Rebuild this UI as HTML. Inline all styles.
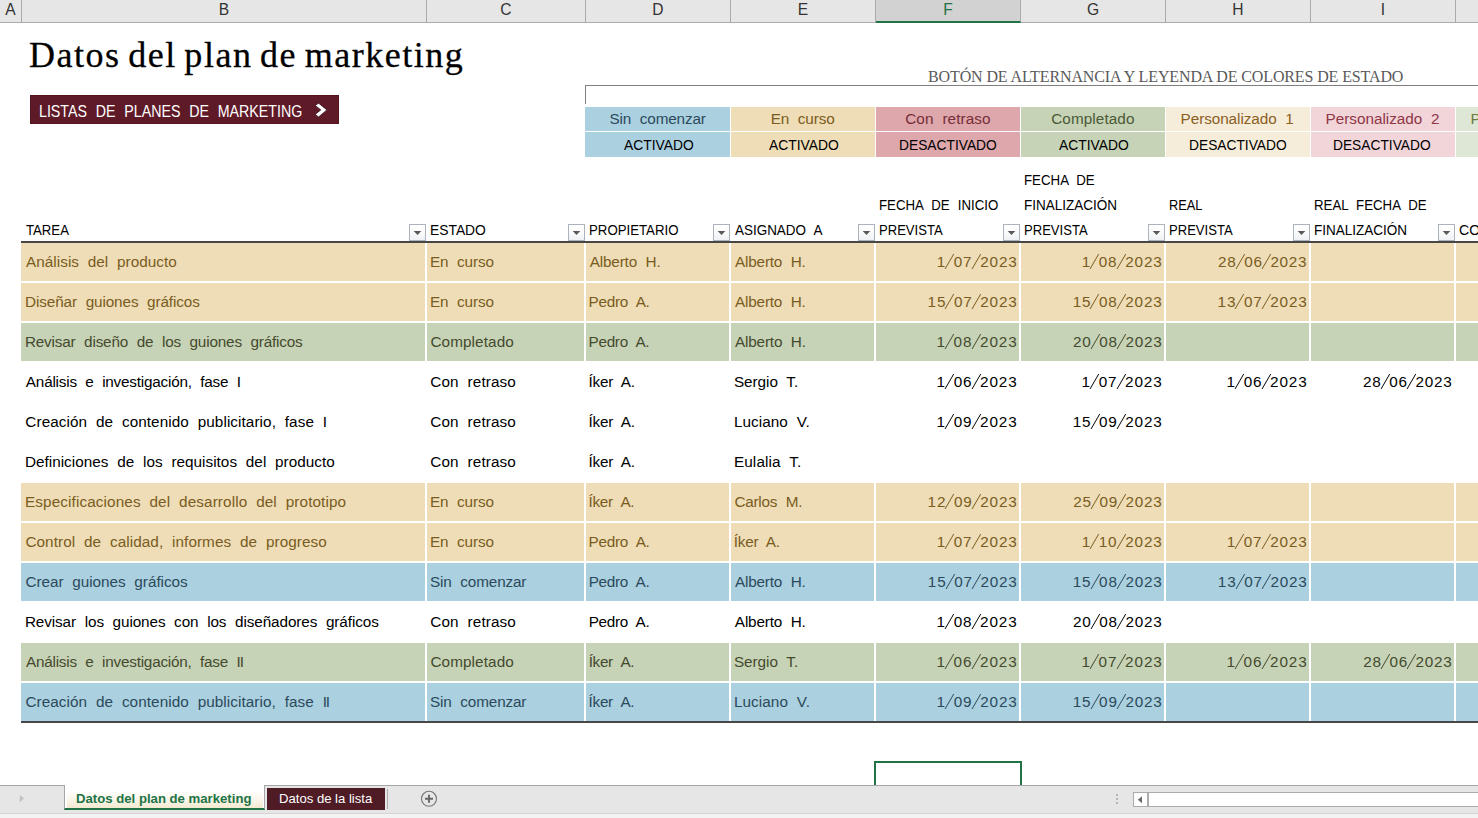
<!DOCTYPE html>
<html><head><meta charset="utf-8"><title>Datos del plan de marketing</title>
<style>
html,body{margin:0;padding:0;}
body{width:1478px;height:818px;overflow:hidden;background:#fff;position:relative;font-family:"Liberation Sans",sans-serif;font-size:15.3px;color:#000;}
div,span{box-sizing:border-box;}
.abs{position:absolute;}
.colhdr{position:absolute;top:0;height:22px;background:#e6e6e6;border-right:1px solid #ababab;text-align:center;font-size:15.6px;line-height:19px;color:#333;}
.colhdr.sel{height:23px;background:#d2d2d2;color:#217346;border-bottom:2px solid #217346;}
.bg{position:absolute;height:38px;}
.t{position:absolute;white-space:nowrap;line-height:17.09px;height:17.09px;transform-origin:0 0;display:block;}
.t i{display:inline-block;width:1.3px;height:14.6px;background:currentColor;transform:skewX(-30deg);margin:0 3.2px;vertical-align:-1.2px;}
.t b{font-weight:normal;letter-spacing:-1.2px;}
.fb{position:absolute;width:17px;height:17px;top:224px;border:1px solid #adb3bc;background:linear-gradient(#ffffff 0%,#fcfcfd 40%,#eef1f5 100%);}
.fb svg{position:absolute;left:0;top:0;}
.lg{position:absolute;}
</style></head><body>

<div class="abs" style="left:0;top:0;width:1478px;height:23px;background:#e6e6e6;border-bottom:1px solid #ababab;"></div>
<div class="colhdr" style="left:0px;width:22px;">A</div>
<div class="colhdr" style="left:22px;width:405px;">B</div>
<div class="colhdr" style="left:427px;width:159px;">C</div>
<div class="colhdr" style="left:586px;width:145px;">D</div>
<div class="colhdr" style="left:731px;width:145px;">E</div>
<div class="colhdr sel" style="left:876px;width:145px;">F</div>
<div class="colhdr" style="left:1021px;width:145px;">G</div>
<div class="colhdr" style="left:1166px;width:145px;">H</div>
<div class="colhdr" style="left:1311px;width:145px;">I</div>
<div class="colhdr" style="left:1456px;width:145px;">J</div>
<div class="abs" id="title" style="left:29px;top:33px;font-family:'Liberation Serif',serif;font-size:36px;line-height:44px;white-space:nowrap;letter-spacing:1.52px;word-spacing:-2.9px;-webkit-text-stroke:0.3px #000;">Datos del plan de marketing</div>
<div class="abs" style="left:30px;top:95px;width:309px;height:29px;background:#5F1A28;border:1px solid #561320;"></div>
<svg class="abs" style="left:312px;top:100px;" width="18" height="20" viewBox="0 0 18 20"><path d="M3.2 5.4 L6.6 3.2 L14.9 9.9 L6.6 16.9 L3.2 14.4 L8.8 9.9 Z" fill="#fff" stroke="#2a060c" stroke-width="0.7"/></svg>
<div class="abs" id="lh" style="left:928px;top:67px;font-family:'Liberation Serif',serif;font-size:16px;line-height:20px;color:#595959;white-space:nowrap;letter-spacing:-0.12px;">BOTÓN DE ALTERNANCIA Y LEYENDA DE COLORES DE ESTADO</div>
<div class="abs" style="left:585px;top:85px;width:900px;height:19px;border-top:1px solid #7f7f7f;border-left:1px solid #7f7f7f;"></div>
<div class="lg" style="left:585px;top:107px;width:145px;height:24px;background:#ABD0DF;"></div>
<div class="lg" style="left:585px;top:132px;width:145px;height:25px;background:#ABD0DF;"></div>
<div class="lg" style="left:731px;top:107px;width:144px;height:24px;background:#EEDDB6;"></div>
<div class="lg" style="left:731px;top:132px;width:144px;height:25px;background:#EEDDB6;"></div>
<div class="lg" style="left:876px;top:107px;width:144px;height:24px;background:#DDA7AC;"></div>
<div class="lg" style="left:876px;top:132px;width:144px;height:25px;background:#DDA7AC;"></div>
<div class="lg" style="left:1021px;top:107px;width:144px;height:24px;background:#C6D3B6;"></div>
<div class="lg" style="left:1021px;top:132px;width:144px;height:25px;background:#C6D3B6;"></div>
<div class="lg" style="left:1166px;top:107px;width:144px;height:24px;background:#F6ECDA;"></div>
<div class="lg" style="left:1166px;top:132px;width:144px;height:25px;background:#F6ECDA;"></div>
<div class="lg" style="left:1311px;top:107px;width:144px;height:24px;background:#F1D5D9;"></div>
<div class="lg" style="left:1311px;top:132px;width:144px;height:25px;background:#F1D5D9;"></div>
<div class="lg" style="left:1456px;top:107px;width:144px;height:24px;background:#DEE6D5;"></div>
<div class="lg" style="left:1456px;top:132px;width:144px;height:25px;background:#DEE6D5;"></div>
<span class="t" style="left:1470.5px;top:109.70px;color:#6B7A3A;">P</span>
<span class="t" style="left:1458.8px;top:220.70px;color:#000;transform:scaleX(0.92);">COMENTARIOS</span>
<div class="fb" style="left:409px;"><svg width="15" height="15" viewBox="0 0 15 15"><path d="M3.7 5.9 H11.3 L7.5 10.1 Z" fill="#585858"/></svg></div>
<div class="fb" style="left:568px;"><svg width="15" height="15" viewBox="0 0 15 15"><path d="M3.7 5.9 H11.3 L7.5 10.1 Z" fill="#585858"/></svg></div>
<div class="fb" style="left:713px;"><svg width="15" height="15" viewBox="0 0 15 15"><path d="M3.7 5.9 H11.3 L7.5 10.1 Z" fill="#585858"/></svg></div>
<div class="fb" style="left:858px;"><svg width="15" height="15" viewBox="0 0 15 15"><path d="M3.7 5.9 H11.3 L7.5 10.1 Z" fill="#585858"/></svg></div>
<div class="fb" style="left:1003px;"><svg width="15" height="15" viewBox="0 0 15 15"><path d="M3.7 5.9 H11.3 L7.5 10.1 Z" fill="#585858"/></svg></div>
<div class="fb" style="left:1148px;"><svg width="15" height="15" viewBox="0 0 15 15"><path d="M3.7 5.9 H11.3 L7.5 10.1 Z" fill="#585858"/></svg></div>
<div class="fb" style="left:1293px;"><svg width="15" height="15" viewBox="0 0 15 15"><path d="M3.7 5.9 H11.3 L7.5 10.1 Z" fill="#585858"/></svg></div>
<div class="fb" style="left:1438px;"><svg width="15" height="15" viewBox="0 0 15 15"><path d="M3.7 5.9 H11.3 L7.5 10.1 Z" fill="#585858"/></svg></div>
<div class="abs" style="left:21px;top:241px;width:1460px;height:2px;background:#474747;"></div>
<div class="bg" style="left:21px;top:243px;width:404px;background:#EEDDB6;"></div>
<div class="bg" style="left:427px;top:243px;width:157px;background:#EEDDB6;"></div>
<div class="bg" style="left:586px;top:243px;width:143px;background:#EEDDB6;"></div>
<div class="bg" style="left:731px;top:243px;width:143px;background:#EEDDB6;"></div>
<div class="bg" style="left:876px;top:243px;width:143px;background:#EEDDB6;"></div>
<div class="bg" style="left:1021px;top:243px;width:143px;background:#EEDDB6;"></div>
<div class="bg" style="left:1166px;top:243px;width:143px;background:#EEDDB6;"></div>
<div class="bg" style="left:1311px;top:243px;width:143px;background:#EEDDB6;"></div>
<div class="bg" style="left:1456px;top:243px;width:144px;background:#EEDDB6;"></div>
<div class="bg" style="left:21px;top:283px;width:404px;background:#EEDDB6;"></div>
<div class="bg" style="left:427px;top:283px;width:157px;background:#EEDDB6;"></div>
<div class="bg" style="left:586px;top:283px;width:143px;background:#EEDDB6;"></div>
<div class="bg" style="left:731px;top:283px;width:143px;background:#EEDDB6;"></div>
<div class="bg" style="left:876px;top:283px;width:143px;background:#EEDDB6;"></div>
<div class="bg" style="left:1021px;top:283px;width:143px;background:#EEDDB6;"></div>
<div class="bg" style="left:1166px;top:283px;width:143px;background:#EEDDB6;"></div>
<div class="bg" style="left:1311px;top:283px;width:143px;background:#EEDDB6;"></div>
<div class="bg" style="left:1456px;top:283px;width:144px;background:#EEDDB6;"></div>
<div class="bg" style="left:21px;top:323px;width:404px;background:#C6D3B6;"></div>
<div class="bg" style="left:427px;top:323px;width:157px;background:#C6D3B6;"></div>
<div class="bg" style="left:586px;top:323px;width:143px;background:#C6D3B6;"></div>
<div class="bg" style="left:731px;top:323px;width:143px;background:#C6D3B6;"></div>
<div class="bg" style="left:876px;top:323px;width:143px;background:#C6D3B6;"></div>
<div class="bg" style="left:1021px;top:323px;width:143px;background:#C6D3B6;"></div>
<div class="bg" style="left:1166px;top:323px;width:143px;background:#C6D3B6;"></div>
<div class="bg" style="left:1311px;top:323px;width:143px;background:#C6D3B6;"></div>
<div class="bg" style="left:1456px;top:323px;width:144px;background:#C6D3B6;"></div>
<div class="bg" style="left:21px;top:483px;width:404px;background:#EEDDB6;"></div>
<div class="bg" style="left:427px;top:483px;width:157px;background:#EEDDB6;"></div>
<div class="bg" style="left:586px;top:483px;width:143px;background:#EEDDB6;"></div>
<div class="bg" style="left:731px;top:483px;width:143px;background:#EEDDB6;"></div>
<div class="bg" style="left:876px;top:483px;width:143px;background:#EEDDB6;"></div>
<div class="bg" style="left:1021px;top:483px;width:143px;background:#EEDDB6;"></div>
<div class="bg" style="left:1166px;top:483px;width:143px;background:#EEDDB6;"></div>
<div class="bg" style="left:1311px;top:483px;width:143px;background:#EEDDB6;"></div>
<div class="bg" style="left:1456px;top:483px;width:144px;background:#EEDDB6;"></div>
<div class="bg" style="left:21px;top:523px;width:404px;background:#EEDDB6;"></div>
<div class="bg" style="left:427px;top:523px;width:157px;background:#EEDDB6;"></div>
<div class="bg" style="left:586px;top:523px;width:143px;background:#EEDDB6;"></div>
<div class="bg" style="left:731px;top:523px;width:143px;background:#EEDDB6;"></div>
<div class="bg" style="left:876px;top:523px;width:143px;background:#EEDDB6;"></div>
<div class="bg" style="left:1021px;top:523px;width:143px;background:#EEDDB6;"></div>
<div class="bg" style="left:1166px;top:523px;width:143px;background:#EEDDB6;"></div>
<div class="bg" style="left:1311px;top:523px;width:143px;background:#EEDDB6;"></div>
<div class="bg" style="left:1456px;top:523px;width:144px;background:#EEDDB6;"></div>
<div class="bg" style="left:21px;top:563px;width:404px;background:#ABD0DF;"></div>
<div class="bg" style="left:427px;top:563px;width:157px;background:#ABD0DF;"></div>
<div class="bg" style="left:586px;top:563px;width:143px;background:#ABD0DF;"></div>
<div class="bg" style="left:731px;top:563px;width:143px;background:#ABD0DF;"></div>
<div class="bg" style="left:876px;top:563px;width:143px;background:#ABD0DF;"></div>
<div class="bg" style="left:1021px;top:563px;width:143px;background:#ABD0DF;"></div>
<div class="bg" style="left:1166px;top:563px;width:143px;background:#ABD0DF;"></div>
<div class="bg" style="left:1311px;top:563px;width:143px;background:#ABD0DF;"></div>
<div class="bg" style="left:1456px;top:563px;width:144px;background:#ABD0DF;"></div>
<div class="bg" style="left:21px;top:643px;width:404px;background:#C6D3B6;"></div>
<div class="bg" style="left:427px;top:643px;width:157px;background:#C6D3B6;"></div>
<div class="bg" style="left:586px;top:643px;width:143px;background:#C6D3B6;"></div>
<div class="bg" style="left:731px;top:643px;width:143px;background:#C6D3B6;"></div>
<div class="bg" style="left:876px;top:643px;width:143px;background:#C6D3B6;"></div>
<div class="bg" style="left:1021px;top:643px;width:143px;background:#C6D3B6;"></div>
<div class="bg" style="left:1166px;top:643px;width:143px;background:#C6D3B6;"></div>
<div class="bg" style="left:1311px;top:643px;width:143px;background:#C6D3B6;"></div>
<div class="bg" style="left:1456px;top:643px;width:144px;background:#C6D3B6;"></div>
<div class="bg" style="left:21px;top:683px;width:404px;background:#ABD0DF;"></div>
<div class="bg" style="left:427px;top:683px;width:157px;background:#ABD0DF;"></div>
<div class="bg" style="left:586px;top:683px;width:143px;background:#ABD0DF;"></div>
<div class="bg" style="left:731px;top:683px;width:143px;background:#ABD0DF;"></div>
<div class="bg" style="left:876px;top:683px;width:143px;background:#ABD0DF;"></div>
<div class="bg" style="left:1021px;top:683px;width:143px;background:#ABD0DF;"></div>
<div class="bg" style="left:1166px;top:683px;width:143px;background:#ABD0DF;"></div>
<div class="bg" style="left:1311px;top:683px;width:143px;background:#ABD0DF;"></div>
<div class="bg" style="left:1456px;top:683px;width:144px;background:#ABD0DF;"></div>
<div class="abs" style="left:21px;top:721px;width:1460px;height:2px;background:#474747;"></div>
<div class="abs" style="left:874px;top:761px;width:148px;height:30px;border:2px solid #217346;"></div>
<div class="abs" style="left:0;top:785px;width:1478px;height:28px;background:#e6e6e6;border-top:1px solid #a6a6a6;"></div>
<div class="abs" style="left:0;top:813px;width:1478px;height:5px;background:#f3f3f3;border-top:1px solid #d4d4d4;"></div>
<svg class="abs" style="left:18px;top:793px;" width="8" height="11" viewBox="0 0 8 11"><path d="M1.8 1.8 L6 5.5 L1.8 9.2 Z" fill="#c2c2c2"/></svg>
<div class="abs" style="left:64px;top:785px;width:201px;height:25px;background:#fff;border-left:1px solid #a6a6a6;border-right:1px solid #a6a6a6;border-bottom:2px solid #217346;"><div style="position:absolute;left:2px;right:1px;top:1px;bottom:0;background:linear-gradient(#ffffff 0%,#ffffff 20%,#faf5e8 65%,#f3e9d0 100%);"></div></div><div class="abs" id="tab1" style="left:65px;top:786px;width:199px;height:24px;color:#217346;font-weight:bold;font-size:13.4px;line-height:25px;">​</div>
<div class="abs" id="tab2" style="left:267px;top:788px;width:118px;height:22px;background:#4F1B24;color:#fff;font-size:13.5px;"></div>
<div class="abs" style="left:387px;top:789px;width:1px;height:20px;background:#ababab;"></div>
<svg class="abs" style="left:420px;top:790px;" width="18" height="18" viewBox="0 0 18 18"><circle cx="9" cy="8.8" r="7.5" fill="none" stroke="#777" stroke-width="1.1"/><path d="M9 4.8 V12.8 M5 8.8 H13" stroke="#666" stroke-width="1.9"/></svg>
<div class="abs" style="left:1116px;top:794px;width:2px;height:2px;background:#b5b5b5;"></div>
<div class="abs" style="left:1116px;top:798px;width:2px;height:2px;background:#b5b5b5;"></div>
<div class="abs" style="left:1116px;top:802px;width:2px;height:2px;background:#b5b5b5;"></div>
<div class="abs" style="left:1133px;top:792px;width:360px;height:15px;background:#fff;border:1px solid #ababab;"></div>
<div class="abs" style="left:1133px;top:792px;width:16px;height:15px;background:#fff;border:1px solid #ababab;border-right:2px solid #ababab;"></div>
<svg class="abs" style="left:1136px;top:795px;" width="8" height="10" viewBox="0 0 8 10"><path d="M6 1.2 L1.8 4.7 L6 8.2 Z" fill="#6a6a6a"/></svg>
<span class="t" id="t0" style="left:26.02px;top:253.30px;color:#7A5C22;word-spacing:4.5px;letter-spacing:0.033px;">Análisis del producto</span>
<span class="t" id="t1" style="left:430.06px;top:253.30px;color:#7A5C22;word-spacing:4.5px;letter-spacing:-0.139px;">En curso</span>
<span class="t" id="t2" style="left:589.81px;top:253.30px;color:#7A5C22;word-spacing:4.5px;letter-spacing:-0.178px;">Alberto H.</span>
<span class="t" id="t3" style="left:735.02px;top:253.30px;color:#7A5C22;word-spacing:4.5px;letter-spacing:-0.186px;">Alberto H.</span>
<span class="t" id="t4" style="left:936.66px;top:253.30px;color:#7A5C22;word-spacing:0px;letter-spacing:0.873px;">1<i></i>07<i></i>2023</span>
<span class="t" id="t5" style="left:1081.71px;top:253.30px;color:#7A5C22;word-spacing:0px;letter-spacing:0.860px;">1<i></i>08<i></i>2023</span>
<span class="t" id="t6" style="left:1218.07px;top:253.30px;color:#7A5C22;word-spacing:0px;letter-spacing:0.734px;">28<i></i>06<i></i>2023</span>
<span class="t" id="t7" style="left:25.06px;top:293.30px;color:#7A5C22;word-spacing:4.5px;letter-spacing:-0.110px;">Diseñar guiones gráficos</span>
<span class="t" id="t8" style="left:430.06px;top:293.30px;color:#7A5C22;word-spacing:4.5px;letter-spacing:-0.139px;">En curso</span>
<span class="t" id="t9" style="left:588.57px;top:293.30px;color:#7A5C22;word-spacing:4.5px;letter-spacing:-0.272px;">Pedro A.</span>
<span class="t" id="t10" style="left:735.02px;top:293.30px;color:#7A5C22;word-spacing:4.5px;letter-spacing:-0.186px;">Alberto H.</span>
<span class="t" id="t11" style="left:927.59px;top:293.30px;color:#7A5C22;word-spacing:0px;letter-spacing:0.816px;">15<i></i>07<i></i>2023</span>
<span class="t" id="t12" style="left:1072.65px;top:293.30px;color:#7A5C22;word-spacing:0px;letter-spacing:0.819px;">15<i></i>08<i></i>2023</span>
<span class="t" id="t13" style="left:1217.59px;top:293.30px;color:#7A5C22;word-spacing:0px;letter-spacing:0.816px;">13<i></i>07<i></i>2023</span>
<span class="t" id="t14" style="left:24.92px;top:333.30px;color:#454A2E;word-spacing:4.5px;letter-spacing:-0.177px;">Revisar diseño de los guiones gráficos</span>
<span class="t" id="t15" style="left:430.43px;top:333.30px;color:#454A2E;word-spacing:4.5px;letter-spacing:0.093px;">Completado</span>
<span class="t" id="t16" style="left:588.56px;top:333.30px;color:#454A2E;word-spacing:4.5px;letter-spacing:-0.302px;">Pedro A.</span>
<span class="t" id="t17" style="left:734.96px;top:333.30px;color:#454A2E;word-spacing:4.5px;letter-spacing:-0.173px;">Alberto H.</span>
<span class="t" id="t18" style="left:936.51px;top:333.30px;color:#454A2E;word-spacing:0px;letter-spacing:0.894px;">1<i></i>08<i></i>2023</span>
<span class="t" id="t19" style="left:1073.08px;top:333.30px;color:#454A2E;word-spacing:0px;letter-spacing:0.759px;">20<i></i>08<i></i>2023</span>
<span class="t" id="t20" style="left:25.86px;top:373.30px;color:#000;word-spacing:4.5px;letter-spacing:-0.220px;">Análisis e investigación, fase I</span>
<span class="t" id="t21" style="left:430.36px;top:373.30px;color:#000;word-spacing:4.5px;letter-spacing:0.101px;">Con retraso</span>
<span class="t" id="t22" style="left:588.62px;top:373.30px;color:#000;word-spacing:4.5px;letter-spacing:-0.263px;">Íker A.</span>
<span class="t" id="t23" style="left:733.91px;top:373.30px;color:#000;word-spacing:4.5px;letter-spacing:-0.043px;">Sergio T.</span>
<span class="t" id="t24" style="left:936.59px;top:373.30px;color:#000;word-spacing:0px;letter-spacing:0.876px;">1<i></i>06<i></i>2023</span>
<span class="t" id="t25" style="left:1081.60px;top:373.30px;color:#000;word-spacing:0px;letter-spacing:0.857px;">1<i></i>07<i></i>2023</span>
<span class="t" id="t26" style="left:1226.59px;top:373.30px;color:#000;word-spacing:0px;letter-spacing:0.876px;">1<i></i>06<i></i>2023</span>
<span class="t" id="t27" style="left:1363.12px;top:373.30px;color:#000;word-spacing:0px;letter-spacing:0.731px;">28<i></i>06<i></i>2023</span>
<span class="t" id="t28" style="left:25.36px;top:413.30px;color:#000;word-spacing:4.5px;letter-spacing:0.069px;">Creación de contenido publicitario, fase I</span>
<span class="t" id="t29" style="left:430.36px;top:413.30px;color:#000;word-spacing:4.5px;letter-spacing:0.101px;">Con retraso</span>
<span class="t" id="t30" style="left:588.62px;top:413.30px;color:#000;word-spacing:4.5px;letter-spacing:-0.263px;">Íker A.</span>
<span class="t" id="t31" style="left:733.88px;top:413.30px;color:#000;word-spacing:4.5px;letter-spacing:0.066px;">Luciano V.</span>
<span class="t" id="t32" style="left:936.59px;top:413.30px;color:#000;word-spacing:0px;letter-spacing:0.876px;">1<i></i>09<i></i>2023</span>
<span class="t" id="t33" style="left:1072.76px;top:413.30px;color:#000;word-spacing:0px;letter-spacing:0.795px;">15<i></i>09<i></i>2023</span>
<span class="t" id="t34" style="left:24.88px;top:453.30px;color:#000;word-spacing:4.5px;letter-spacing:0.019px;">Definiciones de los requisitos del producto</span>
<span class="t" id="t35" style="left:430.36px;top:453.30px;color:#000;word-spacing:4.5px;letter-spacing:0.101px;">Con retraso</span>
<span class="t" id="t36" style="left:588.62px;top:453.30px;color:#000;word-spacing:4.5px;letter-spacing:-0.263px;">Íker A.</span>
<span class="t" id="t37" style="left:733.88px;top:453.30px;color:#000;word-spacing:4.5px;letter-spacing:0.131px;">Eulalia T.</span>
<span class="t" id="t38" style="left:25.06px;top:493.30px;color:#7A5C22;word-spacing:4.5px;letter-spacing:0.104px;">Especificaciones del desarrollo del prototipo</span>
<span class="t" id="t39" style="left:430.06px;top:493.30px;color:#7A5C22;word-spacing:4.5px;letter-spacing:-0.139px;">En curso</span>
<span class="t" id="t40" style="left:588.47px;top:493.30px;color:#7A5C22;word-spacing:4.5px;letter-spacing:-0.284px;">Íker A.</span>
<span class="t" id="t41" style="left:734.44px;top:493.30px;color:#7A5C22;word-spacing:4.5px;letter-spacing:-0.245px;">Carlos M.</span>
<span class="t" id="t42" style="left:927.59px;top:493.30px;color:#7A5C22;word-spacing:0px;letter-spacing:0.816px;">12<i></i>09<i></i>2023</span>
<span class="t" id="t43" style="left:1073.29px;top:493.30px;color:#7A5C22;word-spacing:0px;letter-spacing:0.721px;">25<i></i>09<i></i>2023</span>
<span class="t" id="t44" style="left:25.44px;top:533.30px;color:#7A5C22;word-spacing:4.5px;letter-spacing:0.065px;">Control de calidad, informes de progreso</span>
<span class="t" id="t45" style="left:430.06px;top:533.30px;color:#7A5C22;word-spacing:4.5px;letter-spacing:-0.139px;">En curso</span>
<span class="t" id="t46" style="left:588.57px;top:533.30px;color:#7A5C22;word-spacing:4.5px;letter-spacing:-0.272px;">Pedro A.</span>
<span class="t" id="t47" style="left:733.87px;top:533.30px;color:#7A5C22;word-spacing:4.5px;letter-spacing:-0.285px;">Íker A.</span>
<span class="t" id="t48" style="left:936.66px;top:533.30px;color:#7A5C22;word-spacing:0px;letter-spacing:0.873px;">1<i></i>07<i></i>2023</span>
<span class="t" id="t49" style="left:1081.71px;top:533.30px;color:#7A5C22;word-spacing:0px;letter-spacing:0.860px;">1<i></i>10<i></i>2023</span>
<span class="t" id="t50" style="left:1226.66px;top:533.30px;color:#7A5C22;word-spacing:0px;letter-spacing:0.873px;">1<i></i>07<i></i>2023</span>
<span class="t" id="t51" style="left:25.40px;top:573.30px;color:#2C4A5C;word-spacing:4.5px;letter-spacing:-0.026px;">Crear guiones gráficos</span>
<span class="t" id="t52" style="left:429.99px;top:573.30px;color:#2C4A5C;word-spacing:4.5px;letter-spacing:-0.140px;">Sin comenzar</span>
<span class="t" id="t53" style="left:588.63px;top:573.30px;color:#2C4A5C;word-spacing:4.5px;letter-spacing:-0.291px;">Pedro A.</span>
<span class="t" id="t54" style="left:734.95px;top:573.30px;color:#2C4A5C;word-spacing:4.5px;letter-spacing:-0.179px;">Alberto H.</span>
<span class="t" id="t55" style="left:927.85px;top:573.30px;color:#2C4A5C;word-spacing:0px;letter-spacing:0.800px;">15<i></i>07<i></i>2023</span>
<span class="t" id="t56" style="left:1072.80px;top:573.30px;color:#2C4A5C;word-spacing:0px;letter-spacing:0.805px;">15<i></i>08<i></i>2023</span>
<span class="t" id="t57" style="left:1217.85px;top:573.30px;color:#2C4A5C;word-spacing:0px;letter-spacing:0.800px;">13<i></i>07<i></i>2023</span>
<span class="t" id="t58" style="left:24.88px;top:613.30px;color:#000;word-spacing:4.5px;letter-spacing:-0.100px;">Revisar los guiones con los diseñadores gráficos</span>
<span class="t" id="t59" style="left:430.36px;top:613.30px;color:#000;word-spacing:4.5px;letter-spacing:0.101px;">Con retraso</span>
<span class="t" id="t60" style="left:588.73px;top:613.30px;color:#000;word-spacing:4.5px;letter-spacing:-0.317px;">Pedro A.</span>
<span class="t" id="t61" style="left:734.86px;top:613.30px;color:#000;word-spacing:4.5px;letter-spacing:-0.168px;">Alberto H.</span>
<span class="t" id="t62" style="left:936.59px;top:613.30px;color:#000;word-spacing:0px;letter-spacing:0.876px;">1<i></i>08<i></i>2023</span>
<span class="t" id="t63" style="left:1073.10px;top:613.30px;color:#000;word-spacing:0px;letter-spacing:0.766px;">20<i></i>08<i></i>2023</span>
<span class="t" id="t64" style="left:25.96px;top:653.30px;color:#454A2E;word-spacing:4.5px;letter-spacing:-0.232px;">Análisis e investigación, fase <b>II</b></span>
<span class="t" id="t65" style="left:430.43px;top:653.30px;color:#454A2E;word-spacing:4.5px;letter-spacing:0.093px;">Completado</span>
<span class="t" id="t66" style="left:588.65px;top:653.30px;color:#454A2E;word-spacing:4.5px;letter-spacing:-0.317px;">Íker A.</span>
<span class="t" id="t67" style="left:733.96px;top:653.30px;color:#454A2E;word-spacing:4.5px;letter-spacing:-0.047px;">Sergio T.</span>
<span class="t" id="t68" style="left:936.51px;top:653.30px;color:#454A2E;word-spacing:0px;letter-spacing:0.894px;">1<i></i>06<i></i>2023</span>
<span class="t" id="t69" style="left:1081.51px;top:653.30px;color:#454A2E;word-spacing:0px;letter-spacing:0.900px;">1<i></i>07<i></i>2023</span>
<span class="t" id="t70" style="left:1226.51px;top:653.30px;color:#454A2E;word-spacing:0px;letter-spacing:0.894px;">1<i></i>06<i></i>2023</span>
<span class="t" id="t71" style="left:1363.28px;top:653.30px;color:#454A2E;word-spacing:0px;letter-spacing:0.736px;">28<i></i>06<i></i>2023</span>
<span class="t" id="t72" style="left:25.40px;top:693.30px;color:#2C4A5C;word-spacing:4.5px;letter-spacing:0.065px;">Creación de contenido publicitario, fase <b>II</b></span>
<span class="t" id="t73" style="left:429.99px;top:693.30px;color:#2C4A5C;word-spacing:4.5px;letter-spacing:-0.140px;">Sin comenzar</span>
<span class="t" id="t74" style="left:588.60px;top:693.30px;color:#2C4A5C;word-spacing:4.5px;letter-spacing:-0.306px;">Íker A.</span>
<span class="t" id="t75" style="left:733.98px;top:693.30px;color:#2C4A5C;word-spacing:4.5px;letter-spacing:0.061px;">Luciano V.</span>
<span class="t" id="t76" style="left:936.57px;top:693.30px;color:#2C4A5C;word-spacing:0px;letter-spacing:0.894px;">1<i></i>09<i></i>2023</span>
<span class="t" id="t77" style="left:1072.80px;top:693.30px;color:#2C4A5C;word-spacing:0px;letter-spacing:0.805px;">15<i></i>09<i></i>2023</span>
<span class="t" id="t78" style="left:26.02px;top:220.70px;color:#000;word-spacing:5px;letter-spacing:0.000px;transform:scaleX(0.8613);">TAREA</span>
<span class="t" id="t79" style="left:430.37px;top:220.70px;color:#000;word-spacing:5px;letter-spacing:0.000px;transform:scaleX(0.9048);">ESTADO</span>
<span class="t" id="t80" style="left:589.30px;top:220.70px;color:#000;word-spacing:5px;letter-spacing:0.000px;transform:scaleX(0.8652);">PROPIETARIO</span>
<span class="t" id="t81" style="left:735.34px;top:220.70px;color:#000;word-spacing:5px;letter-spacing:0.000px;transform:scaleX(0.8794);">ASIGNADO A</span>
<span class="t" id="t82" style="left:879.06px;top:195.80px;color:#000;word-spacing:5px;letter-spacing:0.000px;transform:scaleX(0.8675);">FECHA DE INICIO</span>
<span class="t" id="t83" style="left:879.08px;top:220.70px;color:#000;word-spacing:5px;letter-spacing:0.000px;transform:scaleX(0.8538);">PREVISTA</span>
<span class="t" id="t84" style="left:1023.86px;top:170.90px;color:#000;word-spacing:5px;letter-spacing:0.000px;transform:scaleX(0.8678);">FECHA DE</span>
<span class="t" id="t85" style="left:1023.51px;top:195.80px;color:#000;word-spacing:5px;letter-spacing:0.000px;transform:scaleX(0.8836);">FINALIZACIÓN</span>
<span class="t" id="t86" style="left:1024.02px;top:220.70px;color:#000;word-spacing:5px;letter-spacing:0.000px;transform:scaleX(0.8538);">PREVISTA</span>
<span class="t" id="t87" style="left:1169.42px;top:195.80px;color:#000;word-spacing:5px;letter-spacing:0.000px;transform:scaleX(0.8374);">REAL</span>
<span class="t" id="t88" style="left:1169.14px;top:220.70px;color:#000;word-spacing:5px;letter-spacing:0.000px;transform:scaleX(0.8538);">PREVISTA</span>
<span class="t" id="t89" style="left:1314.38px;top:195.80px;color:#000;word-spacing:5px;letter-spacing:0.000px;transform:scaleX(0.8658);">REAL FECHA DE</span>
<span class="t" id="t90" style="left:1313.89px;top:220.70px;color:#000;word-spacing:5px;letter-spacing:0.000px;transform:scaleX(0.8836);">FINALIZACIÓN</span>
<span class="t" id="t91" style="left:609.56px;top:109.70px;color:#2C4A5C;word-spacing:4.5px;letter-spacing:-0.150px;">Sin comenzar</span>
<span class="t" id="t92" style="left:623.59px;top:135.90px;color:#000;word-spacing:5px;letter-spacing:0.000px;transform:scaleX(0.9036);">ACTIVADO</span>
<span class="t" id="t93" style="left:770.67px;top:109.70px;color:#7A5C22;word-spacing:4.5px;letter-spacing:-0.109px;">En curso</span>
<span class="t" id="t94" style="left:769.04px;top:135.90px;color:#000;word-spacing:5px;letter-spacing:0.000px;transform:scaleX(0.9073);">ACTIVADO</span>
<span class="t" id="t95" style="left:905.17px;top:109.70px;color:#772D37;word-spacing:4.5px;letter-spacing:0.105px;">Con retraso</span>
<span class="t" id="t96" style="left:899.07px;top:135.90px;color:#000;word-spacing:5px;letter-spacing:0.000px;transform:scaleX(0.9007);">DESACTIVADO</span>
<span class="t" id="t97" style="left:1051.18px;top:109.70px;color:#4A5A36;word-spacing:4.5px;letter-spacing:0.085px;">Completado</span>
<span class="t" id="t98" style="left:1059.13px;top:135.90px;color:#000;word-spacing:5px;letter-spacing:0.000px;transform:scaleX(0.9047);">ACTIVADO</span>
<span class="t" id="t99" style="left:1180.56px;top:109.70px;color:#8A601F;word-spacing:4.5px;letter-spacing:-0.066px;">Personalizado 1</span>
<span class="t" id="t100" style="left:1188.85px;top:135.90px;color:#000;word-spacing:5px;letter-spacing:0.000px;transform:scaleX(0.9005);">DESACTIVADO</span>
<span class="t" id="t101" style="left:1325.61px;top:109.70px;color:#8F3646;word-spacing:4.5px;letter-spacing:-0.022px;">Personalizado 2</span>
<span class="t" id="t102" style="left:1333.37px;top:135.90px;color:#000;word-spacing:5px;letter-spacing:0.000px;transform:scaleX(0.8995);">DESACTIVADO</span>
<span class="t" id="t103" style="left:39.44px;top:101.59px;color:#fff;word-spacing:5.5px;letter-spacing:0.000px;font-size:16.2px;line-height:18.10px;height:18.10px;transform:scaleX(0.8786);">LISTAS DE PLANES DE MARKETING</span>
<span class="t" id="t104" style="left:76.20px;top:791.03px;color:#217346;word-spacing:0px;letter-spacing:0.000px;font-size:13.5px;line-height:15.08px;height:15.08px;font-weight:bold;transform:scaleX(0.9746);">Datos del plan de marketing</span>
<span class="t" id="t105" style="left:278.87px;top:792.10px;color:#fff;word-spacing:0px;letter-spacing:0.000px;font-size:13.2px;line-height:14.74px;height:14.74px;transform:scaleX(0.9940);">Datos de la lista</span>
</body></html>
